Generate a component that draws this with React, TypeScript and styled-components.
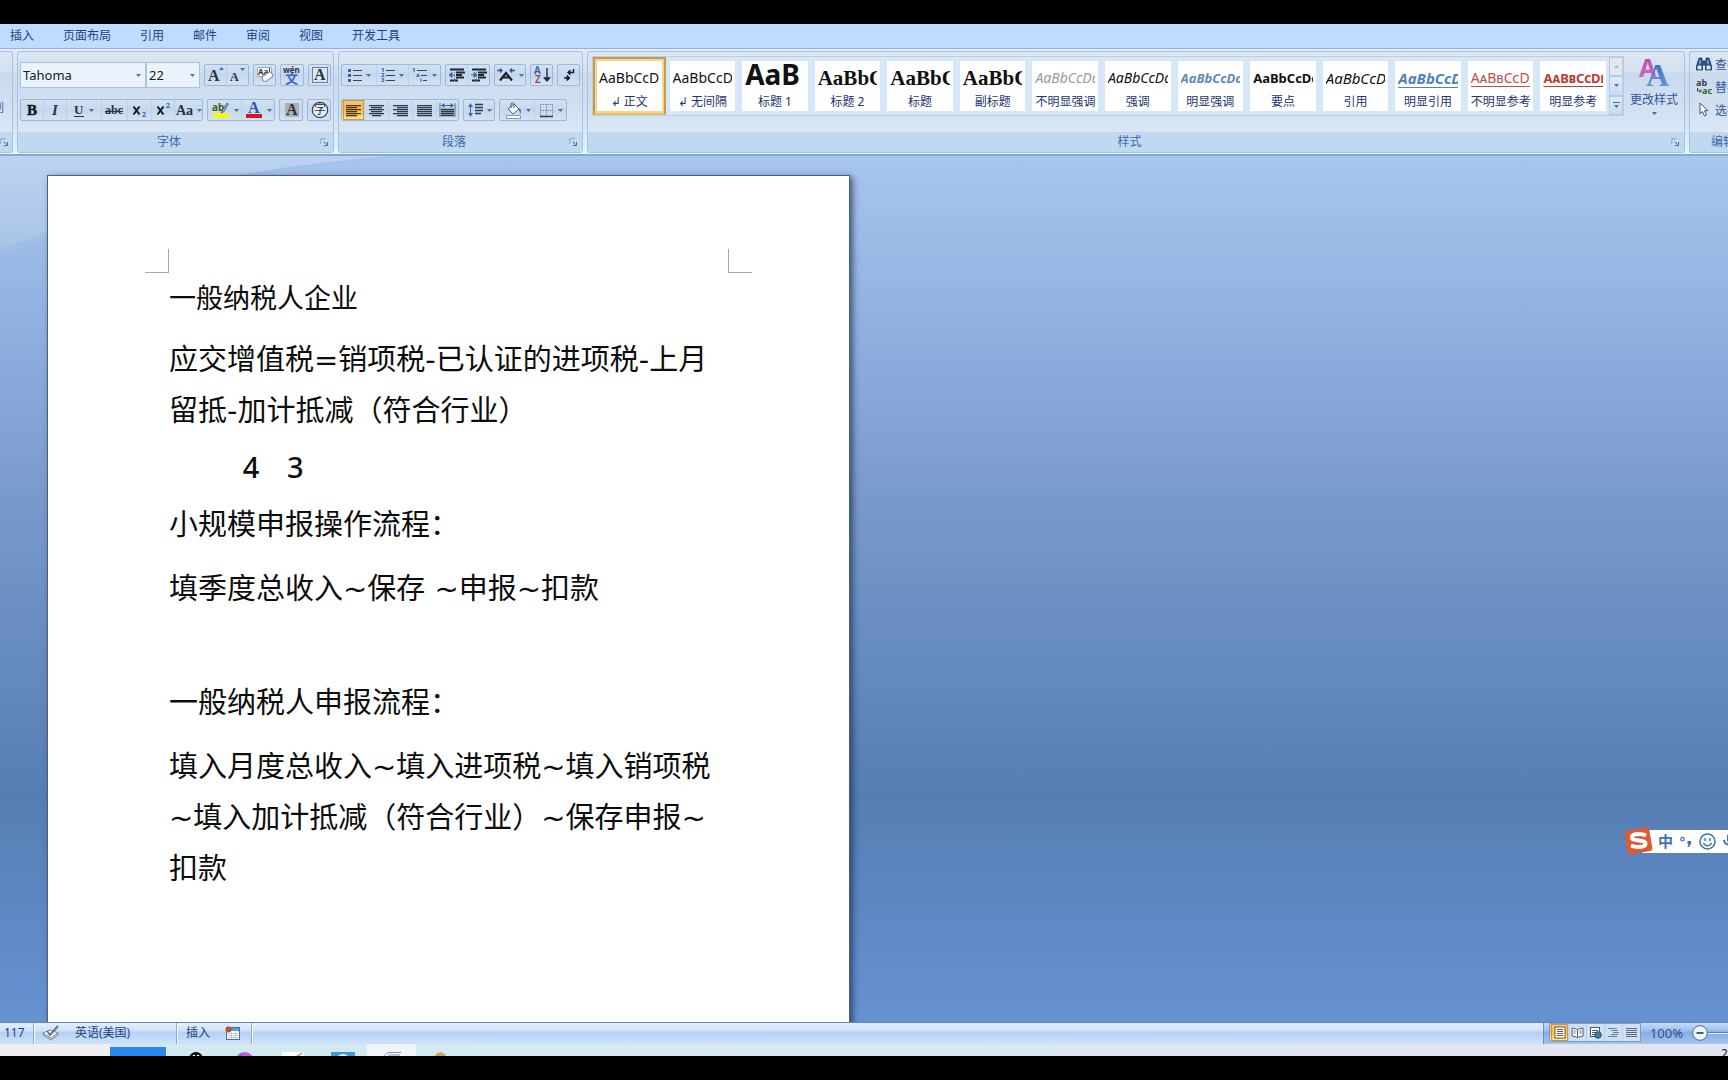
import React from "react";
import styled, { createGlobalStyle, css } from "styled-components";

const UI = `"Noto Sans", "Noto Sans CJK SC", sans-serif`;
const SERIF = `"Liberation Serif", "Noto Sans CJK SC", serif`;

const GlobalStyle = createGlobalStyle`
  *, *::before, *::after { box-sizing: border-box; }
  body { margin: 0; background: #000; font-family: ${UI}; font-size: 12px; overflow: hidden; }
  button, select { font: inherit; color: inherit; }
  p { margin: 0; }
  svg { display: block; flex: none; }
`;

const Shell = styled.div`
  display: flex;
  flex-direction: column;
  height: 100vh;
  padding: 24px 0;
  overflow: hidden;
  background: #000;
`;

/* ---------- tabs ---------- */

const TabBar = styled.nav`
  display: flex;
  flex: none;
  align-items: center;
  gap: 29px;
  height: 24px;
  padding: 0 10px;
  background: #bfdbff;
`;

const Tab = styled.button`
  padding: 0;
  border: 0;
  background: none;
  color: #1f3f86;
  line-height: 20px;
  white-space: nowrap;
`;

/* ---------- ribbon ---------- */

const Ribbon = styled.div`
  display: flex;
  flex: none;
  gap: 4px;
  height: 108px;
  padding: 2px 0 1px;
  border-top: 1px solid #8fb1de;
  border-bottom: 2px solid #87a9c9;
  background: linear-gradient(#dfe8f7 0, #d3e0f2 24px, #c9daee 26px, #d7e7f6 84px, #d9fbff 100%);
  box-shadow: inset 0 1px 0 #e6effb;
`;

const GroupBox = styled.section<{ $width?: number; $edge?: "left" | "right" }>`
  display: flex;
  flex-direction: column;
  flex: ${(p) => (p.$width ? `0 0 ${p.$width}px` : "1 1 0")};
  min-width: 0;
  overflow: hidden;
  border: 1px solid #a9c2de;
  border-radius: 3px;
  background: linear-gradient(#dde6f4 0, #d3e0f0 20px, #c9daed 21px, #d8e6f5 80px);
  ${(p) => p.$edge === "left" && "border-left: 0; border-radius: 0 3px 3px 0;"}
  ${(p) => p.$edge === "right" && "border-right: 0; border-radius: 3px 0 0 3px;"}
`;

const GroupBody = styled.div<{ $row?: boolean }>`
  display: flex;
  flex: 1;
  min-height: 0;
  flex-direction: ${(p) => (p.$row ? "row" : "column")};
  gap: ${(p) => (p.$row ? 2 : 9)}px;
  padding: ${(p) => (p.$row ? "4px 2px 0 4px" : "10px 2px 0")};
`;

const GroupFooter = styled.div`
  display: flex;
  flex: none;
  align-items: center;
  justify-content: space-between;
  height: 20px;
  padding-right: 5px;
  background: #c1d8f0;
  color: #3e6aaa;
  white-space: nowrap;
`;

const GroupName = styled.span<{ $start?: boolean }>`
  flex: 1;
  padding-left: ${(p) => (p.$start ? 21 : 0)}px;
  text-align: ${(p) => (p.$start ? "left" : "center")};
  line-height: 20px;
`;

const Launcher = styled.button`
  padding: 0;
  border: 0;
  background: none;
`;

const ToolRow = styled.div`
  display: flex;
  align-items: center;
  gap: 4px;
  height: 26px;
`;

const Cluster = styled.div`
  display: flex;
  height: 22px;
  border: 1px solid #9db8da;
  border-radius: 2px;
  background: linear-gradient(#d3e2f3, #c3d7ee 50%, #d3e3f4);
  overflow: hidden;
`;

const Tool = styled.button<{ $w: number; $on?: boolean }>`
  display: flex;
  align-items: center;
  justify-content: center;
  gap: 4px;
  width: ${(p) => p.$w}px;
  padding: 0;
  border: 0;
  border-left: 1px solid #bcd0e8;
  background: none;
  &:first-child { border-left-color: transparent; }
  ${(p) =>
    p.$on &&
    css`
      background: linear-gradient(#f5c681, #fbb94c 45%, #fde79a);
      box-shadow: inset 0 0 0 1px #c99a55;
    `}
`;

const ComboGroup = styled.div`
  display: flex;
`;

const Combo = styled.label<{ $w: number }>`
  display: flex;
  align-items: center;
  width: ${(p) => p.$w}px;
  height: 26px;
  padding-right: 4px;
  border: 1px solid #abc1de;
  background: #eaf2fb;
  color: #1c1c1c;
`;

const ComboSelect = styled.select`
  flex: 1;
  min-width: 0;
  height: 24px;
  padding: 0 0 0 2px;
  border: 0;
  outline: 0;
  appearance: none;
  background: transparent;
  font-family: "Noto Sans", sans-serif;
  font-size: 13px;
`;

/* ---------- style gallery ---------- */

const Gallery = styled.div`
  display: flex;
  flex: 1;
  min-width: 0;
  height: 60px;
  border: 1px solid #b9cfe8;
  background: #d6e7f8;
`;

const GalleryGrid = styled.div`
  display: grid;
  flex: 1;
  grid-template-columns: repeat(14, minmax(0, 1fr));
`;

const StyleTile = styled.button<{ $on?: boolean }>`
  display: flex;
  flex-direction: column;
  min-width: 0;
  margin: ${(p) => (p.$on ? "0" : "4px 3px 4px 4px")};
  height: ${(p) => (p.$on ? 58 : 50)}px;
  border: ${(p) => (p.$on ? "2px solid #c39b57" : "0")};
  border-bottom-color: #e8c25c;
  box-shadow: ${(p) => (p.$on ? "inset 0 0 0 2px #f9d58c" : "none")};
  background: #fff;
  padding: ${(p) => (p.$on ? "2px 4px" : "0 3px")};
`;

type Look = {
  size: number;
  bold?: boolean;
  italic?: boolean;
  serif?: boolean;
  caps?: boolean;
  line?: boolean;
  color?: string;
};

const Sample = styled.span<{ $look: Look }>`
  display: block;
  width: 100%;
  height: 32px;
  overflow: hidden;
  text-align: left;
  white-space: nowrap;
  line-height: ${(p) => (p.$look.size > 24 ? 26 : 34)}px;
  font-family: ${(p) => (p.$look.serif ? SERIF : UI)};
  font-size: ${(p) => p.$look.size}px;
  font-weight: ${(p) => (p.$look.bold ? 700 : 400)};
  font-style: ${(p) => (p.$look.italic ? "italic" : "normal")};
  font-variant: ${(p) => (p.$look.caps ? "small-caps" : "normal")};
  text-decoration: ${(p) => (p.$look.line ? "underline" : "none")};
  text-underline-offset: 3px;
  color: ${(p) => p.$look.color ?? "#111"};
`;

const TileName = styled.span`
  width: 100%;
  color: #24346f;
  line-height: 18px;
  text-align: center;
  white-space: nowrap;
`;

const ScrollRail = styled.div`
  display: grid;
  grid-template-rows: repeat(3, 1fr);
  flex: none;
  width: 14px;
`;

const RailButton = styled.button<{ $dim?: boolean }>`
  display: flex;
  align-items: center;
  justify-content: center;
  padding: 0;
  border: 1px solid #b3cae6;
  background: ${(p) => (p.$dim ? "#e3e7ee" : "linear-gradient(#dfebf8, #c7dbf1)")};
`;

const ChangeStyles = styled.button`
  display: flex;
  flex: none;
  flex-direction: column;
  align-items: center;
  width: 56px;
  height: 70px;
  padding: 0;
  border: 0;
  background: none;
  color: #2f5796;
  line-height: 24px;
`;

const EditList = styled.div`
  display: flex;
  flex-direction: column;
  gap: 4px;
  padding: 2px 0 0 6px;
`;

const EditButton = styled.button`
  display: flex;
  align-items: center;
  gap: 3px;
  height: 19px;
  padding: 0;
  border: 0;
  background: none;
  color: #2f5796;
  white-space: nowrap;
`;

const PainterRow = styled.div`
  display: flex;
  flex: 1;
  align-items: flex-start;
  padding-top: 46px;
`;

const PainterButton = styled.button`
  display: flex;
  justify-content: flex-end;
  width: 4px;
  padding: 0;
  border: 0;
  background: none;
  color: #3e6aaa;
  line-height: 20px;
  white-space: nowrap;
`;

/* ---------- workspace ---------- */

const Workspace = styled.main`
  position: relative;
  flex: 1;
  min-height: 0;
  overflow: hidden;
  padding: 19px 0 0 47px;
  background: linear-gradient(#a8c5ee 0, #8fb0df 20%, #7899cb 40%, #567eb3 74%, #6692d2 100%);
`;

const Swoosh = styled.svg`
  position: absolute;
  top: 0;
  left: 0;
`;

const Sheet = styled.article`
  position: relative;
  width: 803px;
  height: 1136px;
  padding: 97px 120px 0 121px;
  border: 1px solid #49607f;
  background: #fff;
  box-shadow: 3px 2px 6px rgba(20, 40, 80, 0.65);
`;

const MarginMark = styled.span<{ $side: "left" | "right" }>`
  position: absolute;
  top: 73px;
  ${(p) => (p.$side === "left" ? "left: 97px; border-right" : "right: 97px; border-left")}: 1px solid #a9a9a9;
  width: 24px;
  height: 24px;
  border-bottom: 1px solid #a9a9a9;
`;

const Paragraph = styled.p<{ $after?: number; $small?: boolean }>`
  min-height: 51px;
  margin-bottom: ${(p) => p.$after ?? 6}px;
  color: #0c0c0c;
  font-family: "DejaVu Sans", "Noto Sans CJK SC", sans-serif;
  font-size: ${(p) => (p.$small ? 27 : 29)}px;
  line-height: 51px;
  white-space: pre-wrap;
`;

const Digit = styled.span`
  font-family: "Noto Sans", sans-serif;
  font-weight: 500;
  line-height: 1;
`;

const ImeBar = styled.aside`
  position: absolute;
  right: 0;
  bottom: 166px;
  display: flex;
  align-items: center;
  width: 104px;
  height: 30px;
`;

const ImeStrip = styled.div`
  display: flex;
  flex: 1;
  align-items: center;
  gap: 7px;
  height: 23px;
  margin-left: -12px;
  padding-left: 16px;
  overflow: hidden;
  background: #fff;
  color: #3c75ad;
`;

const ImeButton = styled.button`
  display: flex;
  flex: none;
  padding: 0;
  border: 0;
  background: none;
  color: #3c75ad;
  font-size: 15px;
  font-weight: 700;
  line-height: 22px;
`;

/* ---------- status bar ---------- */

const StatusBar = styled.footer`
  display: flex;
  flex: none;
  height: 22px;
  border-top: 1px solid #6a87ab;
  background: linear-gradient(#e2eefd 0, #cfe1f8 8px, #b3d0f5 9px, #cfe2fa 100%);
  color: #1f3f7d;
`;

const StatusCell = styled.div<{ $w: number; $pad: number }>`
  display: flex;
  align-items: center;
  gap: 15px;
  width: ${(p) => p.$w}px;
  padding-left: ${(p) => p.$pad}px;
  padding-bottom: 2px;
  border-right: 1px solid #8fa9cb;
  box-shadow: 1px 0 0 #f2f7fe;
  line-height: 18px;
  white-space: nowrap;
`;

const StatusRight = styled.div`
  display: flex;
  align-items: center;
  width: 185px;
  margin-left: auto;
  padding-left: 5px;
  padding-bottom: 2px;
  border-left: 1px solid #6c8fbf;
  background: linear-gradient(#c5dbf7 0, #9dbfea 8px, #83aee2 9px, #a4c6ee 100%);
  overflow: hidden;
`;

const ViewCluster = styled.div`
  display: flex;
  height: 19px;
  border: 1px solid #7f9fca;
  background: #cfe0f5;
`;

const Percent = styled.button`
  width: 51px;
  padding: 0;
  border: 0;
  background: none;
  color: #2f4d8b;
  font-size: 13px;
  line-height: 18px;
`;

const ZoomOut = styled.button`
  padding: 0;
  border: 0;
  background: none;
`;

const ZoomTrack = styled.span`
  flex: 1;
  height: 2px;
  border-top: 1px solid #5f83b8;
  background: #e6f0fc;
`;

/* ---------- task bar ---------- */

const TaskBar = styled.div`
  display: flex;
  flex: none;
  height: 12px;
  overflow: hidden;
  background: linear-gradient(90deg, #d0e8ef 0, #d5eaf1 30%, #e3e6f1 90%);
`;

const SearchBox = styled.div`
  width: 110px;
  background: #efefef;
`;

const ActiveTask = styled.div`
  width: 56px;
  margin-top: 3px;
  background: #2a87ef;
`;

const TaskButton = styled.button<{ $on?: boolean }>`
  display: flex;
  justify-content: center;
  align-items: flex-start;
  width: 49px;
  padding: 8px 0 0;
  border: 0;
  background: ${(p) => (p.$on ? "#eef6fa" : "none")};
`;

const TaskIcons = styled.div`
  display: flex;
  padding-left: 5px;
`;

const Clock = styled.span`
  width: 7px;
  margin-left: auto;
  padding-top: 2px;
  overflow: hidden;
  color: #1b1b1b;
  line-height: 16px;
`;

/* ---------- icons ---------- */

const Caret = ({ color = "#56708f" }: { color?: string }) => (
  <svg width="5" height="3" viewBox="0 0 5 3">
    <path d="M0 0h5L2.5 3z" fill={color} />
  </svg>
);

const LauncherIcon = () => (
  <svg width="8" height="8" viewBox="0 0 8 8" fill="none">
    <path d="M1 6V1h5" stroke="#6d8db8" />
    <path d="M2 7V2h5" stroke="#fff" strokeWidth="0.6" />
    <path d="M7.5 4v3.5H4M3.5 3.5l3 3" stroke="#4c6a94" />
  </svg>
);

const Bars = ({ rows, color = "#2f3a4a" }: { rows: [number, number][]; color?: string }) => (
  <svg width="15" height="13" viewBox="0 0 15 13">
    {rows.map(([x, w], i) => (
      <rect key={i} x={x} y={i * 2 + 1} width={w} height="1.3" fill={color} />
    ))}
  </svg>
);

const full: [number, number] = [0, 15];
const LEFT: [number, number][] = [full, [0, 11], full, [0, 11], full, [0, 11]];
const CENTER: [number, number][] = [full, [2, 11], full, [2, 11], full, [3, 9]];
const RIGHT: [number, number][] = [full, [4, 11], full, [4, 11], full, [4, 11]];
const JUSTIFY: [number, number][] = [full, full, full, full, full, full];

const LetterIcon = ({
  children,
  w = 18,
  h = 20,
}: {
  children: React.ReactNode;
  w?: number;
  h?: number;
}) => (
  <svg width={w} height={h} viewBox={`0 0 ${w} ${h}`} fontFamily={SERIF} fontWeight="700" fill="#2b3340">
    {children}
  </svg>
);

const GrowIcon = () => (
  <LetterIcon>
    <text x="1" y="16" fontSize="16">A</text>
    <path d="M12 5l2.500-3 2.500 3z" fill="#3f6fb5" />
  </LetterIcon>
);
const ShrinkIcon = () => (
  <LetterIcon>
    <text x="1" y="16" fontSize="12">A</text>
    <path d="M11 3h5l-2.500 3z" fill="#3f6fb5" />
  </LetterIcon>
);
const ClearIcon = () => (
  <LetterIcon>
    <rect x="1.5" y="2.5" width="14" height="9" rx="1" fill="#f7f9fc" stroke="#9aa7b8" />
    <text x="2" y="10" fontSize="8" fontFamily={UI}>Aa</text>
    <path d="M13.500 3v6" stroke="#444" />
    <rect x="6" y="9" width="11" height="6" rx="2.500" transform="rotate(-35 11 12)" fill="#fff" stroke="#7b8798" />
  </LetterIcon>
);
const PinyinIcon = () => (
  <LetterIcon>
    <text x="0" y="8" fontSize="8" fontFamily={UI}>wén</text>
    <text x="2" y="18" fontSize="13" fontFamily={UI} fill="#3d63bd">文</text>
  </LetterIcon>
);
const BorderedAIcon = () => (
  <LetterIcon>
    <rect x="1.5" y="2.5" width="15" height="15" fill="#dbe7f5" stroke="#6d7f99" />
    <text x="3" y="15" fontSize="16">A</text>
  </LetterIcon>
);
const ShadeAIcon = () => (
  <LetterIcon>
    <rect x="2" y="3" width="14" height="14" fill="#b0b0b0" />
    <text x="3" y="15" fontSize="16">A</text>
  </LetterIcon>
);
const EncircleIcon = () => (
  <LetterIcon>
    <circle cx="9" cy="10" r="7.7" fill="#e6eef8" stroke="#39414e" strokeWidth="1.2" />
    <text x="3" y="14" fontSize="12" fontWeight="400" fontFamily={UI}>字</text>
  </LetterIcon>
);
const BoldIcon = () => (
  <LetterIcon w={12}>
    <text x="1" y="15" fontSize="15" fill="#111" stroke="#111" strokeWidth="0.4">B</text>
  </LetterIcon>
);
const ItalicIcon = () => (
  <LetterIcon w={12}><text x="3" y="15" fontSize="15" fontStyle="italic">I</text></LetterIcon>
);
const UnderlineIcon = () => (
  <LetterIcon w={12}>
    <text x="1" y="14" fontSize="13">U</text>
    <path d="M1 16.5h10" stroke="#2b3340" />
  </LetterIcon>
);
const StrikeIcon = () => (
  <LetterIcon>
    <text x="0" y="14" fontSize="12">abc</text>
    <path d="M0 11.5h18" stroke="#2b3340" />
  </LetterIcon>
);
const SubIcon = () => (
  <LetterIcon w={14}>
    <path d="M1.500 6.500l6 8M7.500 6.500l-6 8" stroke="#151a22" strokeWidth="2" />
    <text x="10" y="17" fontSize="7" fontFamily={UI} fill="#3568b5">2</text>
  </LetterIcon>
);
const SuperIcon = () => (
  <LetterIcon w={14}>
    <path d="M1.500 6.500l6 8M7.500 6.500l-6 8" stroke="#151a22" strokeWidth="2" />
    <text x="10" y="8" fontSize="7" fontFamily={UI} fill="#3568b5">2</text>
  </LetterIcon>
);
const CaseIcon = () => (
  <LetterIcon w={17}><text x="0" y="15" fontSize="14">Aa</text></LetterIcon>
);
const HighlightIcon = () => (
  <LetterIcon>
    <rect x="1" y="13" width="16" height="5" fill="#f8f51b" />
    <text x="0" y="11" fontSize="10" fontFamily={UI} fill="#4c5a1f">ab</text>
    <path d="M16.500 4l-5 8-2 1 .5-2.500 5-7.500z" fill="#8fa6c4" stroke="#3d5372" strokeWidth="0.7" />
  </LetterIcon>
);
const FontColorIcon = () => (
  <LetterIcon>
    <text x="3" y="13" fontSize="16" fill="#2d56a8">A</text>
    <rect x="1" y="14" width="16" height="4" fill="#d8141f" />
  </LetterIcon>
);

const BulletsIcon = () => (
  <svg width="14" height="14" viewBox="0 0 14 14">
    {[1, 6, 11].map((y) => (
      <g key={y}>
        <rect x="0" y={y} width="3" height="3" fill="#3c5f9e" />
        <rect x="5" y={y + 1} width="9" height="1" fill="#3a4350" />
      </g>
    ))}
  </svg>
);
const NumberingIcon = () => (
  <svg width="14" height="16" viewBox="0 0 14 16" fontFamily={UI} fontSize="6" fontWeight="700" fill="#2f57a3">
    {[1, 2, 3].map((n) => (
      <g key={n}>
        <text x="0" y={n * 5}>{n}</text>
        <rect x="5" y={n * 5 - 2} width="9" height="1" fill="#3a4350" />
      </g>
    ))}
  </svg>
);
const MultilevelIcon = () => (
  <svg width="16" height="16" viewBox="0 0 16 16" fontFamily={UI} fontSize="6" fontWeight="700" fill="#2f57a3">
    <text x="0" y="5">1</text>
    <text x="4" y="10">a</text>
    <text x="8" y="15">i</text>
    <path d="M5 3.500h10M9 8.500h6M11 13.500h4" stroke="#3a4350" />
  </svg>
);
const IndentIcon = ({ flip }: { flip?: boolean }) => (
  <svg width="16" height="14" viewBox="0 0 16 14">
    <path d="M1 1.500h14M7 4.500h9M7 7h6M7 9.500h8M1 12.500h8" stroke="#20262f" strokeWidth="1.800" />
    <path d={flip ? "M0 7h3V4.500L6 7 3 9.500V7" : "M6 7H3V4.500L0 7l3 2.500V7"} fill="#3b69b3" stroke="#3b69b3" />
    <path d="M5.500 0v14" stroke="#66768c" strokeDasharray="1 1" />
  </svg>
);
const AsianIcon = () => (
  <svg width="18" height="14" viewBox="0 0 18 14" fill="none">
    <path d="M3 12.500L9 5l6 7.500M5.500 9.500h7" stroke="#1c2129" strokeWidth="2.200" />
    <path d="M0 2.500h5M3 .5l2 2-2 2M18 2.500h-5M15 .5l-2 2 2 2" stroke="#2c56a4" strokeWidth="1.300" />
  </svg>
);
const SortIcon = () => (
  <svg width="17" height="18" viewBox="0 0 17 18" fontFamily={UI} fontSize="10" fontWeight="600">
    <text x="0" y="8" fill="#2f5cb0">A</text>
    <text x="1" y="17" fill="#9c3f4b">Z</text>
    <path d="M13 2v12M10.500 12l2.500 3 2.500-3z" stroke="#262c35" strokeWidth="1.400" fill="#262c35" />
  </svg>
);
const MarkIcon = () => (
  <svg width="12" height="14" viewBox="0 0 12 14" fill="#1c2129" stroke="#1c2129">
    <path d="M10.500 1v3.500H6" fill="none" strokeWidth="1.500" />
    <path d="M7 2L4.500 4.500 7 7z" />
    <path d="M1 10h5" strokeWidth="1.500" />
    <path d="M4 7.500l3 2.500-3 2.500z" />
  </svg>
);
const DistributeIcon = () => (
  <svg width="17" height="16" viewBox="0 0 17 16">
    <path d="M1 1v14M16 1v14" stroke="#5c6d86" />
    <path d="M3 3.500h11" stroke="#3364b1" />
    <path d="M5.500 1L2 3.500 5.500 6zM11.500 1L15 3.500 11.500 6z" fill="#3364b1" />
    <path d="M2 7.500h13M2 9.500h13M2 11.500h13M2 13.500h13" stroke="#2f3a4a" strokeWidth="1.300" />
  </svg>
);
const SpacingIcon = () => (
  <svg width="15" height="16" viewBox="0 0 15 16">
    <path d="M2.500 3v10" stroke="#3364b1" />
    <path d="M0 5l2.500-4L5 5zM0 11l2.500 4L5 11z" fill="#3b6ab5" />
    <path d="M7 2.500h8M7 5.500h8M7 8.500h8M7 11.500h6" stroke="#2f3a4a" strokeWidth="1.400" />
  </svg>
);
const FillIcon = () => (
  <svg width="17" height="17" viewBox="0 0 17 17">
    <path d="M3 7l6-5 5 5-6 5z" fill="#f4f8fd" stroke="#4c5e78" />
    <path d="M6 6V2c0-1.500 3-1.500 3 0v4" fill="none" stroke="#4c5e78" />
    <path d="M13 6c3 0 3.500 3 2.500 6-1-2-1-4-2.500-6z" fill="#3d6cb8" />
    <rect x="1.500" y="13.500" width="14" height="3" fill="#fff" stroke="#8b9ab0" />
  </svg>
);
const BorderIcon = () => (
  <svg width="15" height="15" viewBox="0 0 15 15" fill="none">
    <path d="M1.500 1v13M7.500 1v13M13.500 1v13M1 1.500h13M1 7.500h13" stroke="#7d8ea8" strokeDasharray="1.500 1" />
    <path d="M1 13.500h13" stroke="#2f3a4a" strokeWidth="1.300" />
  </svg>
);

const ChangeIcon = () => (
  <svg width="32" height="32" viewBox="0 0 32 32" fontFamily={SERIF} fontWeight="700">
    <defs>
      <linearGradient id="pink" x1="0" y1="0" x2="0" y2="1">
        <stop offset="0" stopColor="#a24a9d" />
        <stop offset="1" stopColor="#dc6fd0" />
      </linearGradient>
      <linearGradient id="blue" x1="0" y1="0" x2="0" y2="1">
        <stop offset="0" stopColor="#3c62b4" />
        <stop offset="1" stopColor="#6aa0dc" />
      </linearGradient>
    </defs>
    <text x="1" y="21" fontSize="25" fontFamily={UI} fill="url(#pink)">A</text>
    <text x="8" y="30" fontSize="32" fill="url(#blue)">A</text>
  </svg>
);

const FindIcon = () => (
  <svg width="16" height="14" viewBox="0 0 16 14">
    <path
      d="M3 1h3v3h4V1h3l2.500 8v4H9.500V8h-3v5H.5V9z"
      fill="#33568c"
      stroke="#1f3558"
      strokeWidth="0.800"
    />
    <path d="M2 9h3v3H2zM11 9h3v3h-3zM4 3v4M12 3v4" fill="#dbe8f7" stroke="#dbe8f7" strokeWidth="0.800" />
  </svg>
);
const ReplaceIcon = () => (
  <svg width="16" height="16" viewBox="0 0 16 16" fontFamily={UI} fontSize="9" fontWeight="700">
    <text x="0" y="7" fill="#3a3f48">ab</text>
    <path d="M1.500 9v3h3M3.500 10.500l2 1.500-2 1.500" stroke="#3a3f48" fill="none" />
    <text x="6" y="15" fill="#2e6b2c">ac</text>
  </svg>
);
const PointerIcon = () => (
  <svg width="16" height="15" viewBox="0 0 16 15">
    <path d="M4 1v11l2.500-2.500 2 4.500 2-1-2-4.300H12z" fill="#fff" stroke="#44536b" />
  </svg>
);

const ProofIcon = () => (
  <svg width="18" height="17" viewBox="0 0 18 17">
    <path d="M1 9l7-3 8 3-7 6z" fill="#fff" stroke="#7a879b" />
    <path d="M1 9v2l8 5 7-5V9l-7 5z" fill="#cdd8e6" stroke="#7a879b" />
    <path d="M5 7l3 4 8-9" fill="none" stroke="#6a7383" strokeWidth="2" />
  </svg>
);
const MacroIcon = () => (
  <svg width="16" height="14" viewBox="0 0 16 14">
    <rect x="1.500" y="1.500" width="13" height="12" fill="#f8fbff" stroke="#4b6da3" />
    <rect x="2" y="2" width="12" height="3" fill="#6d95d0" />
    <path d="M3 7.500h10M3 9.500h10M3 11.500h10M6.500 6v7M10.500 6v7" stroke="#a9bbd6" strokeWidth="0.700" />
    <circle cx="3.500" cy="3.500" r="3" fill="#b8503f" />
  </svg>
);

const PrintViewIcon = () => (
  <svg width="12" height="13" viewBox="0 0 12 13">
    <rect x="1" y="1" width="10" height="11" fill="#fff" stroke="#6b5a3c" />
    <path d="M3 3.500h6M3 5.500h6M3 7.500h6M3 9.500h6" stroke="#6b5a3c" />
  </svg>
);
const ReadViewIcon = () => (
  <svg width="13" height="13" viewBox="0 0 13 13">
    <path d="M1 2l4.500 1L6.500 4l1-1L12 2v8l-4.500 1-1 1-1-1L1 10z" fill="#fff" stroke="#4f5d73" />
    <path d="M6.500 4v8M2.500 5h2M2.500 7h2M8.500 5h2M8.500 7h2" stroke="#4f5d73" />
  </svg>
);
const WebViewIcon = () => (
  <svg width="13" height="13" viewBox="0 0 13 13">
    <rect x="1.500" y="1.500" width="9" height="9" fill="#fff" stroke="#4f5d73" />
    <path d="M3 4.500h6M3 6.500h4M3 8.500h3" stroke="#4f5d73" />
    <circle cx="9" cy="9" r="3.300" fill="#3a80a0" stroke="#2b506e" />
  </svg>
);
const OutlineViewIcon = () => (
  <svg width="13" height="13" viewBox="0 0 13 13">
    <path d="M1 2.500h9M4 4.500h7M6 6.500h6M4 8.500h7M1 10.500h9" stroke="#6f7d92" />
  </svg>
);
const DraftViewIcon = () => (
  <svg width="13" height="13" viewBox="0 0 13 13">
    <path d="M1 2.500h11M1 4.500h11M1 6.500h11M1 8.500h11M1 10.500h11" stroke="#5b687c" />
  </svg>
);

const SogouLogo = styled.svg`
  position: relative;
  z-index: 1;
`;

const SogouIcon = () => (
  <SogouLogo width="30" height="30" viewBox="0 0 30 30">
    <rect x="2" y="3" width="25" height="24" rx="3" transform="rotate(-10 14 15)" fill="#de5a32" />
    <path
      d="M22 9.500C17 7 8 7.500 8 11.500c0 4.500 13.500 1.500 13.500 6 0 4-9 4.500-14.500 2"
      fill="none"
      stroke="#fff"
      strokeWidth="4"
    />
  </SogouLogo>
);
const PunctIcon = () => (
  <svg width="12" height="14" viewBox="0 0 12 14">
    <circle cx="2.500" cy="5" r="1.700" fill="none" stroke="#3c75ad" strokeWidth="1.200" />
    <path d="M7.500 7h3.500v3l-2 3H7.500l1-3h-1z" fill="#3c75ad" />
  </svg>
);
const SmileIcon = () => (
  <svg width="17" height="17" viewBox="0 0 17 17" fill="none" stroke="#3c75ad" strokeWidth="1.500">
    <circle cx="8.500" cy="8.500" r="7.500" />
    <path d="M6 5v3M11 5v3M4.500 10c1.500 3.500 6.500 3.500 8 0" />
  </svg>
);
const MicIcon = () => (
  <svg width="12" height="16" viewBox="0 0 12 16" fill="none" stroke="#3c75ad" strokeWidth="2">
    <rect x="4" y="1" width="5" height="8" rx="2" fill="#3c75ad" stroke="none" />
    <path d="M1 7c0 6 10 6 10 0M6 12v3" />
  </svg>
);

/* ---------- data ---------- */

const TABS = ["插入", "页面布局", "引用", "邮件", "审阅", "视图", "开发工具"];

const LONG = "AaBbCcDd";
const STYLES: { name: string; text: string; look: Look; on?: boolean }[] = [
  { name: "↲ 正文", text: "AaBbCcD", look: { size: 14 }, on: true },
  { name: "↲ 无间隔", text: "AaBbCcD", look: { size: 14 } },
  { name: "标题 1", text: "AaB", look: { size: 28, bold: true } },
  { name: "标题 2", text: "AaBbC", look: { size: 21, bold: true, serif: true } },
  { name: "标题", text: "AaBbC", look: { size: 21, bold: true, serif: true } },
  { name: "副标题", text: "AaBbC", look: { size: 21, bold: true, serif: true } },
  { name: "不明显强调", text: LONG, look: { size: 14, italic: true, color: "#9a9a9a" } },
  { name: "强调", text: LONG, look: { size: 14, italic: true } },
  { name: "明显强调", text: LONG, look: { size: 13, italic: true, bold: true, color: "#5f8abd" } },
  { name: "要点", text: LONG, look: { size: 13, bold: true } },
  { name: "引用", text: "AaBbCcD", look: { size: 15, italic: true } },
  {
    name: "明显引用",
    text: "AaBbCcD",
    look: { size: 15, italic: true, bold: true, line: true, color: "#4f81bd" },
  },
  { name: "不明显参考", text: LONG, look: { size: 14, caps: true, line: true, color: "#c0504d" } },
  { name: "明显参考", text: LONG, look: { size: 13, caps: true, bold: true, line: true, color: "#c0392f" } },
];

type ToolSpec = [label: string, width: number, icon: React.ReactNode, menu?: boolean, on?: boolean];

const Tools = ({ items }: { items: ToolSpec[] }) => (
  <Cluster>
    {items.map(([label, w, icon, menu, on]) => (
      <Tool key={label} type="button" aria-label={label} $w={w} $on={on}>
        {icon}
        {menu && <Caret />}
      </Tool>
    ))}
  </Cluster>
);

const Footer = ({ name }: { name: string }) => (
  <GroupFooter>
    <GroupName>{name}</GroupName>
    <Launcher type="button" aria-label={`${name}选项`}>
      <LauncherIcon />
    </Launcher>
  </GroupFooter>
);

/* ---------- sections ---------- */

const ClipboardGroup = () => (
  <GroupBox $width={13} $edge="left">
    <PainterRow>
      <PainterButton type="button">格式刷</PainterButton>
    </PainterRow>
    <GroupFooter>
      <Launcher type="button" aria-label="剪贴板选项">
        <LauncherIcon />
      </Launcher>
    </GroupFooter>
  </GroupBox>
);

const FontGroup = () => (
  <GroupBox $width={317}>
    <GroupBody>
      <ToolRow>
        <ComboGroup>
          <Combo $w={126}>
            <ComboSelect aria-label="字体" defaultValue="Tahoma">
              <option>Tahoma</option>
            </ComboSelect>
            <Caret />
          </Combo>
          <Combo $w={54}>
            <ComboSelect aria-label="字号" defaultValue="22">
              <option>22</option>
            </ComboSelect>
            <Caret />
          </Combo>
        </ComboGroup>
        <Tools items={[["增大字体", 22, <GrowIcon />], ["缩小字体", 22, <ShrinkIcon />]]} />
        <Tools items={[["清除格式", 22, <ClearIcon />]]} />
        <Tools items={[["拼音指南", 22, <PinyinIcon />]]} />
        <Tools items={[["字符边框", 22, <BorderedAIcon />]]} />
      </ToolRow>
      <ToolRow>
        <Tools
          items={[
            ["加粗", 22, <BoldIcon />],
            ["倾斜", 23, <ItalicIcon />],
            ["下划线", 35, <UnderlineIcon />, true],
            ["删除线", 26, <StrikeIcon />],
            ["下标", 24, <SubIcon />],
            ["上标", 24, <SuperIcon />],
            ["更改大小写", 28, <CaseIcon />, true],
          ]}
        />
        <Tools
          items={[
            ["突出显示", 33, <HighlightIcon />, true],
            ["字体颜色", 33, <FontColorIcon />, true],
          ]}
        />
        <Tools items={[["字符底纹", 22, <ShadeAIcon />]]} />
        <Tools items={[["带圈字符", 22, <EncircleIcon />]]} />
      </ToolRow>
    </GroupBody>
    <Footer name="字体" />
  </GroupBox>
);

const ParagraphGroup = () => (
  <GroupBox $width={245}>
    <GroupBody>
      <ToolRow>
        <Tools
          items={[
            ["项目符号", 34, <BulletsIcon />, true],
            ["编号", 32, <NumberingIcon />, true],
            ["多级列表", 32, <MultilevelIcon />, true],
          ]}
        />
        <Tools items={[["减少缩进量", 22, <IndentIcon />], ["增加缩进量", 22, <IndentIcon flip />]]} />
        <Tools items={[["中文版式", 30, <AsianIcon />, true]]} />
        <Tools items={[["排序", 21, <SortIcon />]]} />
        <Tools items={[["显示编辑标记", 21, <MarkIcon />]]} />
      </ToolRow>
      <ToolRow>
        <Tools
          items={[
            ["左对齐", 22, <Bars rows={LEFT} color="#4a3717" />, false, true],
            ["居中", 24, <Bars rows={CENTER} />],
            ["右对齐", 24, <Bars rows={RIGHT} />],
            ["两端对齐", 24, <Bars rows={JUSTIFY} />],
            ["分散对齐", 22, <DistributeIcon />],
          ]}
        />
        <Tools items={[["行距", 30, <SpacingIcon />, true]]} />
        <Tools items={[["底纹", 34, <FillIcon />, true], ["框线", 32, <BorderIcon />, true]]} />
      </ToolRow>
    </GroupBody>
    <Footer name="段落" />
  </GroupBox>
);

const StylesGroup = () => (
  <GroupBox>
    <GroupBody $row>
      <Gallery>
        <GalleryGrid>
          {STYLES.map((s) => (
            <StyleTile key={s.name} type="button" $on={s.on}>
              <Sample $look={s.look}>{s.text}</Sample>
              <TileName>{s.name}</TileName>
            </StyleTile>
          ))}
        </GalleryGrid>
        <ScrollRail>
          <RailButton type="button" aria-label="上一行" $dim>
            <svg width="5" height="3" viewBox="0 0 5 3">
              <path d="M0 3h5L2.500 0z" fill="#b9b2b0" />
            </svg>
          </RailButton>
          <RailButton type="button" aria-label="下一行">
            <Caret />
          </RailButton>
          <RailButton type="button" aria-label="其他">
            <svg width="7" height="7" viewBox="0 0 7 7">
              <path d="M0 .5h7" stroke="#56708f" />
              <path d="M1 3h5L3.500 6z" fill="#56708f" />
            </svg>
          </RailButton>
        </ScrollRail>
      </Gallery>
      <ChangeStyles type="button">
        <ChangeIcon />
        更改样式
        <Caret color="#5a6675" />
      </ChangeStyles>
    </GroupBody>
    <Footer name="样式" />
  </GroupBox>
);

const EditGroup = () => (
  <GroupBox $width={39} $edge="right">
    <EditList>
      <EditButton type="button"><FindIcon />查找</EditButton>
      <EditButton type="button"><ReplaceIcon />替换</EditButton>
      <EditButton type="button"><PointerIcon />选择</EditButton>
    </EditList>
    <GroupBody />
    <GroupFooter>
      <GroupName $start>编辑</GroupName>
    </GroupFooter>
  </GroupBox>
);

const Document = () => (
  <Sheet lang="zh-CN">
    <MarginMark $side="left" />
    <MarginMark $side="right" />
    <Paragraph $small $after={11}>一般纳税人企业</Paragraph>
    <Paragraph>应交增值税=销项税-已认证的进项税-上月留抵-加计抵减（符合行业）</Paragraph>
    <Paragraph>
      {"        "}
      <Digit>4</Digit>
      {"   "}
      <Digit>3</Digit>
    </Paragraph>
    <Paragraph $after={13}>小规模申报操作流程：</Paragraph>
    <Paragraph>填季度总收入~保存 ~申报~扣款</Paragraph>
    <Paragraph />
    <Paragraph $after={13}>一般纳税人申报流程：</Paragraph>
    <Paragraph>填入月度总收入~填入进项税~填入销项税~填入加计抵减（符合行业）~保存申报~扣款</Paragraph>
  </Sheet>
);

const Status = () => (
  <StatusBar>
    <StatusCell $w={34} $pad={4}>117</StatusCell>
    <StatusCell $w={143} $pad={8}>
      <ProofIcon />
      英语(美国)
    </StatusCell>
    <StatusCell $w={75} $pad={9}>
      插入
      <MacroIcon />
    </StatusCell>
    <StatusRight>
      <ViewCluster>
        <Tool type="button" aria-label="页面视图" $w={18} $on><PrintViewIcon /></Tool>
        <Tool type="button" aria-label="阅读版式" $w={18}><ReadViewIcon /></Tool>
        <Tool type="button" aria-label="Web 版式" $w={18}><WebViewIcon /></Tool>
        <Tool type="button" aria-label="大纲视图" $w={18}><OutlineViewIcon /></Tool>
        <Tool type="button" aria-label="普通视图" $w={18}><DraftViewIcon /></Tool>
      </ViewCluster>
      <Percent type="button">100%</Percent>
      <ZoomOut type="button" aria-label="缩小">
        <svg width="16" height="16" viewBox="0 0 16 16">
          <circle cx="8" cy="8" r="7.300" fill="#edf3fb" stroke="#5a6f92" />
          <path d="M4.500 8h7" stroke="#4b5b78" strokeWidth="2" />
        </svg>
      </ZoomOut>
      <ZoomTrack />
    </StatusRight>
  </StatusBar>
);

const Tasks = () => (
  <TaskBar>
    <SearchBox />
    <ActiveTask />
    <TaskIcons>
      <TaskButton type="button" aria-label="QQ">
        <svg width="14" height="14" viewBox="0 0 14 14">
          <circle cx="7" cy="7" r="7" fill="#0a0a0a" />
          <circle cx="5" cy="4" r="1.300" fill="#fff" />
          <circle cx="9" cy="4" r="1.300" fill="#fff" />
        </svg>
      </TaskButton>
      <TaskButton type="button" aria-label="浏览器">
        <svg width="18" height="18" viewBox="0 0 18 18">
          <circle cx="9" cy="9" r="9" fill="#c65fdd" />
          <path d="M0 9a9 9 0 0 1 6-8.500L7 9z" fill="#7b6be0" />
        </svg>
      </TaskButton>
      <TaskButton type="button" aria-label="记事本">
        <svg width="24" height="12" viewBox="0 0 24 12">
          <rect width="22" height="12" fill="#fdfdfb" />
          <path d="M14 5l6-4" stroke="#9b9b8c" strokeWidth="1.500" />
        </svg>
      </TaskButton>
      <TaskButton type="button" aria-label="文件">
        <svg width="24" height="14" viewBox="0 0 24 14">
          <rect width="24" height="14" fill="#409ad8" />
          <ellipse cx="12" cy="5" rx="5" ry="3" fill="#d9f0fc" />
        </svg>
      </TaskButton>
      <TaskButton type="button" aria-label="文档" $on>
        <svg width="20" height="14" viewBox="0 0 20 14">
          <path d="M1 8C2 3 4 1 7 .5h12M5 8c0-3 1-5 3-5h10" fill="none" stroke="#8b95a5" />
        </svg>
      </TaskButton>
      <TaskButton type="button" aria-label="文件夹">
        <svg width="12" height="12" viewBox="0 0 12 12">
          <path d="M0 4c2-5 9-5 11 0z" fill="#caa75a" />
        </svg>
      </TaskButton>
    </TaskIcons>
    <Clock>2</Clock>
  </TaskBar>
);

export default function App() {
  return (
    <>
      <GlobalStyle />
      <Shell>
        <TabBar>
          {TABS.map((t) => (
            <Tab key={t} type="button">{t}</Tab>
          ))}
        </TabBar>
        <Ribbon>
          <ClipboardGroup />
          <FontGroup />
          <ParagraphGroup />
          <StylesGroup />
          <EditGroup />
        </Ribbon>
        <Workspace>
          <Swoosh width="400" height="110" viewBox="0 0 400 110" aria-hidden="true">
            <defs>
              <linearGradient id="sky" x1="0" y1="0" x2="0" y2="1">
                <stop offset="0" stopColor="#bcd2f1" />
                <stop offset="1" stopColor="#a9c4e8" />
              </linearGradient>
            </defs>
            <path d="M0 0h400Q180 20 48 82 24 91 0 101z" fill="#a5bfe5" opacity="0.700" />
            <path d="M0 0h390Q170 18 48 76 24 84 0 93z" fill="url(#sky)" />
          </Swoosh>
          <Document />
          <ImeBar>
            <SogouIcon />
            <ImeStrip>
              <ImeButton type="button">中</ImeButton>
              <ImeButton type="button" aria-label="标点"><PunctIcon /></ImeButton>
              <ImeButton type="button" aria-label="表情"><SmileIcon /></ImeButton>
              <ImeButton type="button" aria-label="语音"><MicIcon /></ImeButton>
            </ImeStrip>
          </ImeBar>
        </Workspace>
        <Status />
        <Tasks />
      </Shell>
    </>
  );
}
